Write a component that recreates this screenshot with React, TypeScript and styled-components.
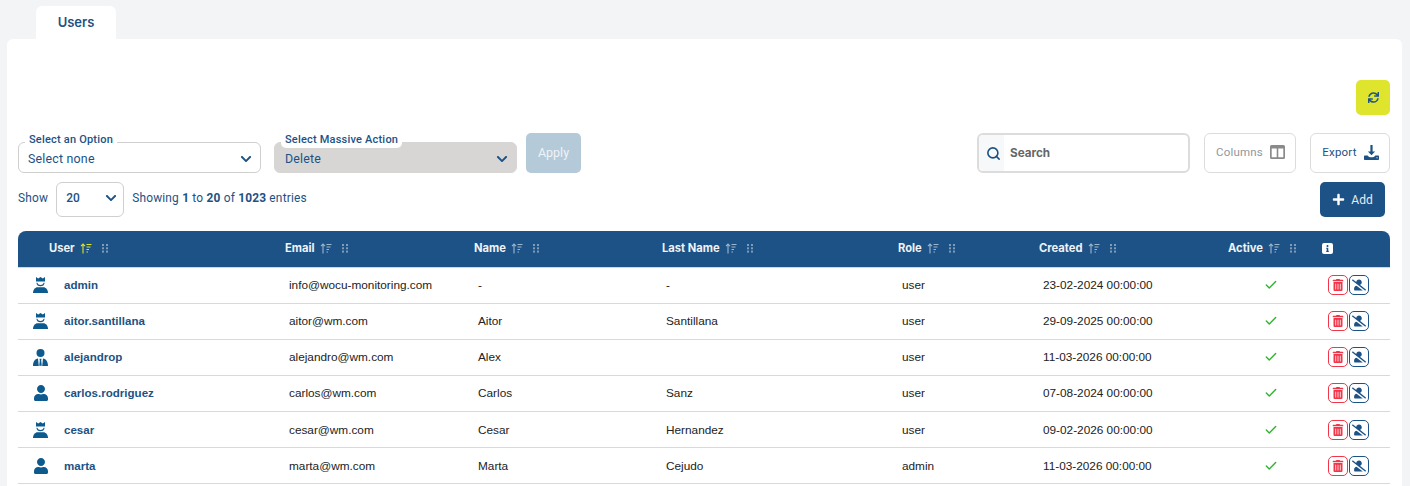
import React from "react";
import styled, { createGlobalStyle } from "styled-components";
import { FaTrashAlt, FaUserSlash, FaUser, FaSync, FaPlus, FaChevronDown, FaInfo } from "react-icons/fa";
import { FiSearch } from "react-icons/fi";
import { Check } from "lucide-react";

const navy = "#1c5285";
const line = "#d9d9d9";

const Global = createGlobalStyle`
  html, body { margin: 0; padding: 0; background: #f3f4f6; height: 486px; overflow: hidden; }
  * { box-sizing: border-box; }
  body { font-family: Roboto, "Liberation Sans", sans-serif; color: ${navy}; }
`;

const Page = styled.div`
  width: 1410px;
  height: 486px;
  padding: 6px 8px 0 7px;
  overflow: hidden;
`;
const Tabs = styled.div`
  display: flex;
  padding-left: 29px;
`;
const Tab = styled.div`
  width: 80px;
  height: 33px;
  background: #fff;
  border-radius: 6px 6px 0 0;
  display: flex;
  align-items: center;
  justify-content: center;
  padding-bottom: 1px;
  font: 600 13px Inter, Roboto, sans-serif;
  color: ${navy};
`;
const Card = styled.div`
  background: #fff;
  border-radius: 6px 6px 0 0;
  padding: 41px 12px 0 11px;
  height: 460px;
`;
const RefreshRow = styled.div`
  display: flex;
  justify-content: flex-end;
  height: 53px;
`;
const RefreshButton = styled.button`
  width: 34px;
  height: 35px;
  border: none;
  border-radius: 5px;
  background: #dfe52c;
  color: ${navy};
  display: flex;
  align-items: center;
  justify-content: center;
  padding: 0;
  font-size: 11px;
`;
const Toolbar = styled.div`
  display: flex;
  align-items: flex-end;
  height: 40px;
`;
const FieldWrap = styled.div<{ $disabled?: boolean }>`
  position: relative;
  width: 243px;
  height: 31px;
  border: 1px solid ${p => (p.$disabled ? "#d7d6d4" : "#cfcfcf")};
  border-radius: 6px;
  background: ${p => (p.$disabled ? "#d7d6d4" : "#fff")};
  display: flex;
  align-items: center;
  justify-content: space-between;
  padding: 2px 8px 0 ${p => (p.$disabled ? 10 : 9)}px;
  font-size: 12.4px;
  letter-spacing: 0.2px;
  margin-right: 13px;
`;
const Legend = styled.span`
  position: absolute;
  left: 6px;
  top: -10px;
  padding: 0 4px;
  height: 15px;
  line-height: 13px;
  font-size: 11px;
  font-weight: 500;
  background: #fff;
  border-radius: 0 0 5px 5px;
  white-space: nowrap;
`;
const Chevron = styled(FaChevronDown)`
  font-size: 12px;
  color: ${navy};
`;
const ApplyButton = styled.button`
  width: 55px;
  height: 40px;
  border: none;
  border-radius: 5px;
  background: #b5cad9;
  color: #eef3f7;
  font: 400 12.5px Roboto, sans-serif;
  margin-left: -4px;
  padding: 0 0 2px;
`;
const Spacer = styled.div`
  flex: 1;
`;
const SearchBox = styled.div`
  width: 213px;
  height: 40px;
  border: 2px solid #dcdcdc;
  border-radius: 6px;
  display: flex;
  align-items: center;
  overflow: hidden;
  margin-right: 14px;
`;
const SearchIcon = styled.div`
  width: 25px;
  height: 100%;
  background: #f7f8fa;
  display: flex;
  align-items: center;
  justify-content: center;
  padding-left: 3px;
  font-size: 15px;
  color: ${navy};
`;
const SearchText = styled.span`
  margin-left: 6px;
  font: 700 11.7px Inter, Roboto, sans-serif;
  color: #666;
`;
const OutlineButton = styled.div<{ $w: number; $muted?: boolean }>`
  width: ${p => p.$w}px;
  height: 40px;
  border: 1px solid #dcdcdc;
  border-radius: 6px;
  display: flex;
  align-items: center;
  justify-content: center;
  gap: 7px;
  padding-bottom: 2px;
  padding-left: 1px;
  font-size: 11.5px;
  letter-spacing: 0.2px;
  color: ${p => (p.$muted ? "#8f979d" : navy)};
  margin-left: ${p => (p.$muted ? 0 : 14)}px;
`;
const ShowRow = styled.div`
  display: flex;
  align-items: flex-start;
  justify-content: space-between;
  padding-top: 9px;
  height: 58px;
`;
const ShowLeft = styled.div`
  display: flex;
  align-items: center;
  font-size: 11.9px;
  letter-spacing: 0.2px;
  height: 35px;
`;
const PageLabel = styled.span`
  padding-bottom: 3px;
`;
const PageSize = styled.div`
  width: 68px;
  height: 35px;
  margin: 0 8px 0 8px;
  border: 1px solid #cfcfcf;
  border-radius: 6px;
  display: flex;
  align-items: center;
  justify-content: space-between;
  padding: 0 6px 3px 9px;
  font-weight: 500;
`;
const Strong = styled.b`
  font-weight: 700;
`;
const AddButton = styled.button`
  width: 65px;
  height: 35px;
  border: none;
  border-radius: 5px;
  background: ${navy};
  color: #e6edf3;
  display: flex;
  align-items: center;
  justify-content: center;
  gap: 6px;
  font: 400 12px Roboto, sans-serif;
  margin-right: 5px;
  padding: 0;
`;
const Grid = "263px 189px 188px 236px 141px 189px 94px 72px";
const HeadRow = styled.div`
  display: grid;
  grid-template-columns: ${Grid};
  height: 36.6px;
  background: ${navy};
  border-radius: 8px 8px 0 0;
  border-bottom: 1px solid #d5d5d5;
`;
const HeadCell = styled.div<{ $first?: boolean }>`
  display: flex;
  align-items: center;
  padding-left: ${p => (p.$first ? 31 : 4)}px;
  padding-bottom: 1px;
  color: #eef3f7;
  font: 700 11.2px Inter, Roboto, sans-serif;
  gap: 5px;
`;
const Row = styled.div`
  display: grid;
  grid-template-columns: ${Grid};
  height: 36.1px;
  border-bottom: 1px solid ${line};
  align-items: center;
`;
const Cell = styled.div`
  padding-left: 8px;
  font: 400 11.8px "Liberation Sans", Arial, sans-serif;
  color: #222;
  white-space: nowrap;
`;
const UserCell = styled.div`
  display: flex;
  align-items: center;
  padding-left: 15px;
`;
const AvatarSlot = styled.div`
  width: 31px;
  height: 18px;
  display: flex;
  align-items: center;
  color: #0d5a8e;
  font-size: 16px;
`;
const UserName = styled.span`
  font: 700 11.55px "Liberation Sans", Arial, sans-serif;
  color: ${navy};
`;
const CheckCell = styled.div`
  padding-left: 40px;
  color: #2fb52f;
  display: flex;
`;
const Actions = styled.div`
  display: flex;
  padding-left: 10px;
  gap: 1px;
`;
const IconBtn = styled.div<{ $color: string; $size: number }>`
  width: 20px;
  height: 20px;
  border: 1px solid ${p => p.$color};
  border-radius: 5px;
  color: ${p => p.$color};
  display: flex;
  align-items: center;
  justify-content: center;
  font-size: ${p => p.$size}px;
`;
const InfoBadge = styled.div`
  width: 11px;
  height: 11px;
  background: #fff;
  border-radius: 2px;
  color: ${navy};
  display: flex;
  align-items: center;
  justify-content: center;
  font-size: 7px;
`;

const SortIcon = ({ active }: { active?: boolean }) => (
  <svg width="12" height="11" viewBox="0 0 12 11" fill="none" stroke={active ? "#dfe52c" : "#9fb7cd"} strokeWidth="1.1">
    <path d="M3 10.500V1M1 3.200 3 1l2 2.200" />
    <path d="M6.500 1.500h5M6.500 4h4M6.500 6.500h2.500M6.500 9H8" />
  </svg>
);
const DragIcon = () => (
  <svg width="7" height="9" viewBox="0 0 7 9" fill="#7f9cb9" style={{ marginLeft: 5 }}>
    {[0, 3.3, 6.6].map(y => [0, 4].map(x => <rect key={`${x}-${y}`} x={x} y={y} width="2" height="2" />))}
  </svg>
);
const CrownUser = () => (
  <svg width="15" height="16" viewBox="0 0 15 16" fill="#0d5a8e">
    <path d="M3 0 5.200 1.500 7.500 0 9.800 1.500 12 0v4.600H3z" />
    <path d="M3.400 5.800h1C4.800 7.400 6 8 7.500 8s2.700-.6 3.100-2.200h1c-.2 2.400-1.800 3.500-4.100 3.500S3.600 8.200 3.400 5.800z" />
    <path d="M0 16c0-3.600 2.200-5.800 4.600-5.800h5.800c2.400 0 4.600 2.200 4.600 5.800z" />
  </svg>
);
const TieUser = () => (
  <svg width="15" height="17" viewBox="0 0 15 17" fill="#0d5a8e">
    <circle cx="7.500" cy="4" r="4" />
    <path d="M5 9.500C2 9.800 0 12.500 0 17h5.800L5 9.500zM10 9.500c3 .3 5 3 5 7.500H9.200L10 9.500z" />
    <path d="M6.500 9.800h2l-.3 2 .6 5H6.200l.6-5z" />
  </svg>
);
const ColumnsIcon = () => (
  <svg width="15" height="14" viewBox="0 0 15 14">
    <path fill="#8a8a8a" fillRule="evenodd" d="M1.500 0h12A1.500 1.500 0 0 1 15 1.500v11a1.500 1.500 0 0 1-1.500 1.500h-12A1.500 1.500 0 0 1 0 12.500v-11A1.500 1.500 0 0 1 1.500 0zM1.700 3.500v8.800h5V3.500zm6.600 0v8.800h5V3.500z" />
  </svg>
);
const ExportIcon = () => (
  <svg width="15" height="15" viewBox="0 0 15 15" fill={navy}>
    <path d="M6.400 0h2.200v6.500h2.500L7.500 10.300 3.900 6.500h2.500z" />
    <path fillRule="evenodd" d="M1 10.500h2.600c.8 1.300 2.200 1.800 3.900 1.800s3.100-.5 3.900-1.800H14c.6 0 1 .4 1 1v2.500c0 .6-.4 1-1 1H1c-.6 0-1-.4-1-1v-2.500c0-.6.4-1 1-1zM12.500 12.300v1h1v-1z" />
  </svg>
);

type U = { u: string; email: string; name: string; last: string; role: string; date: string; icon: "crown" | "tie" | "user" };
const users: U[] = [
  { u: "admin", email: "info@wocu-monitoring.com", name: "-", last: "-", role: "user", date: "23-02-2024 00:00:00", icon: "crown" },
  { u: "aitor.santillana", email: "aitor@wm.com", name: "Aitor", last: "Santillana", role: "user", date: "29-09-2025 00:00:00", icon: "crown" },
  { u: "alejandrop", email: "alejandro@wm.com", name: "Alex", last: "", role: "user", date: "11-03-2026 00:00:00", icon: "tie" },
  { u: "carlos.rodriguez", email: "carlos@wm.com", name: "Carlos", last: "Sanz", role: "user", date: "07-08-2024 00:00:00", icon: "user" },
  { u: "cesar", email: "cesar@wm.com", name: "Cesar", last: "Hernandez", role: "user", date: "09-02-2026 00:00:00", icon: "crown" },
  { u: "marta", email: "marta@wm.com", name: "Marta", last: "Cejudo", role: "admin", date: "11-03-2026 00:00:00", icon: "user" },
];
const heads = ["User", "Email", "Name", "Last Name", "Role", "Created", "Active"];

export default function App() {
  return (
    <>
      <Global />
      <Page>
        <Tabs><Tab>Users</Tab></Tabs>
        <Card>
          <RefreshRow>
            <RefreshButton><FaSync /></RefreshButton>
          </RefreshRow>
          <Toolbar>
            <FieldWrap>
              <Legend>Select an Option</Legend>
              Select none
              <Chevron />
            </FieldWrap>
            <FieldWrap $disabled>
              <Legend>Select Massive Action</Legend>
              Delete
              <Chevron />
            </FieldWrap>
            <ApplyButton>Apply</ApplyButton>
            <Spacer />
            <SearchBox>
              <SearchIcon><FiSearch strokeWidth={2.6} /></SearchIcon>
              <SearchText>Search</SearchText>
            </SearchBox>
            <OutlineButton $w={92} $muted>Columns <ColumnsIcon /></OutlineButton>
            <OutlineButton $w={80}>Export <ExportIcon /></OutlineButton>
          </Toolbar>
          <ShowRow>
            <ShowLeft>
              <PageLabel>Show</PageLabel>
              <PageSize>20 <Chevron /></PageSize>
              <PageLabel>Showing <Strong>1</Strong> to <Strong>20</Strong> of <Strong>1023</Strong> entries</PageLabel>
            </ShowLeft>
            <AddButton><FaPlus size={13} color="#fff" /> Add</AddButton>
          </ShowRow>
          <HeadRow>
            {heads.map((h, i) => (
              <HeadCell key={h} $first={i === 0}>
                {h} <SortIcon active={i === 0} /> <DragIcon />
              </HeadCell>
            ))}
            <HeadCell><InfoBadge><FaInfo /></InfoBadge></HeadCell>
          </HeadRow>
          {users.map(r => (
            <Row key={r.u}>
              <UserCell>
                <AvatarSlot>
                  {r.icon === "crown" ? <CrownUser /> : r.icon === "tie" ? <TieUser /> : <FaUser />}
                </AvatarSlot>
                <UserName>{r.u}</UserName>
              </UserCell>
              <Cell>{r.email}</Cell>
              <Cell>{r.name}</Cell>
              <Cell>{r.last}</Cell>
              <Cell>{r.role}</Cell>
              <Cell>{r.date}</Cell>
              <CheckCell><Check size={14} strokeWidth={2.4} /></CheckCell>
              <Actions>
                <IconBtn $color="#f2364a" $size={12}><FaTrashAlt /></IconBtn>
                <IconBtn $color={navy} $size={14}><FaUserSlash /></IconBtn>
              </Actions>
            </Row>
          ))}
        </Card>
      </Page>
    </>
  );
}
